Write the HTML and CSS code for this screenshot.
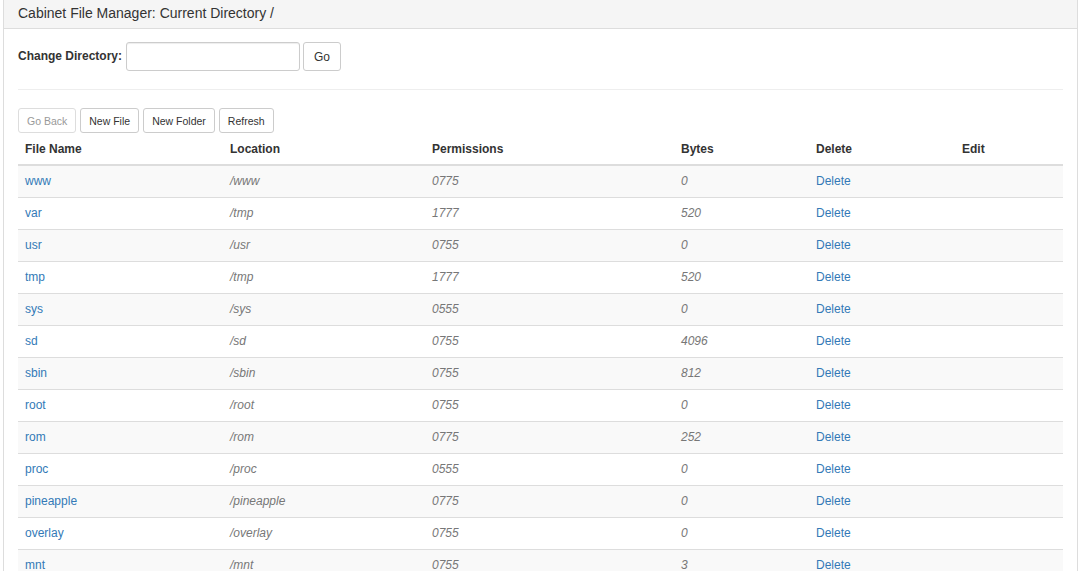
FILE: index.html
```html
<!DOCTYPE html>
<html lang="en">
<head>
<meta charset="utf-8">
<title>Cabinet File Manager</title>
<link rel="stylesheet" href="styles.css">
</head>
<body>
<div class="panel">
  <div class="panel-heading">Cabinet File Manager: Current Directory /</div>
  <div class="panel-body">
    <form class="dir-form">
      <label class="dir-label" for="dir">Change Directory:</label>
      <input class="dir-input" id="dir" type="text">
      <button class="btn btn-go" type="button">Go</button>
    </form>
    <hr class="divider">
    <div class="toolbar">
      <button class="btn btn-sm" type="button" disabled>Go Back</button>
      <button class="btn btn-sm" type="button">New File</button>
      <button class="btn btn-sm" type="button">New Folder</button>
      <button class="btn btn-sm" type="button">Refresh</button>
    </div>
    <table class="files">
      <colgroup>
        <col class="c-name"><col class="c-loc"><col class="c-perm"><col class="c-bytes"><col class="c-del"><col class="c-edit">
      </colgroup>
      <thead>
        <tr><th>File Name</th><th>Location</th><th>Permissions</th><th>Bytes</th><th>Delete</th><th>Edit</th></tr>
      </thead>
      <tbody>
        <tr><td><a href="#">www</a></td><td class="m">/www</td><td class="m">0775</td><td class="m">0</td><td><a href="#">Delete</a></td><td></td></tr>
        <tr><td><a href="#">var</a></td><td class="m">/tmp</td><td class="m">1777</td><td class="m">520</td><td><a href="#">Delete</a></td><td></td></tr>
        <tr><td><a href="#">usr</a></td><td class="m">/usr</td><td class="m">0755</td><td class="m">0</td><td><a href="#">Delete</a></td><td></td></tr>
        <tr><td><a href="#">tmp</a></td><td class="m">/tmp</td><td class="m">1777</td><td class="m">520</td><td><a href="#">Delete</a></td><td></td></tr>
        <tr><td><a href="#">sys</a></td><td class="m">/sys</td><td class="m">0555</td><td class="m">0</td><td><a href="#">Delete</a></td><td></td></tr>
        <tr><td><a href="#">sd</a></td><td class="m">/sd</td><td class="m">0755</td><td class="m">4096</td><td><a href="#">Delete</a></td><td></td></tr>
        <tr><td><a href="#">sbin</a></td><td class="m">/sbin</td><td class="m">0755</td><td class="m">812</td><td><a href="#">Delete</a></td><td></td></tr>
        <tr><td><a href="#">root</a></td><td class="m">/root</td><td class="m">0755</td><td class="m">0</td><td><a href="#">Delete</a></td><td></td></tr>
        <tr><td><a href="#">rom</a></td><td class="m">/rom</td><td class="m">0775</td><td class="m">252</td><td><a href="#">Delete</a></td><td></td></tr>
        <tr><td><a href="#">proc</a></td><td class="m">/proc</td><td class="m">0555</td><td class="m">0</td><td><a href="#">Delete</a></td><td></td></tr>
        <tr><td><a href="#">pineapple</a></td><td class="m">/pineapple</td><td class="m">0775</td><td class="m">0</td><td><a href="#">Delete</a></td><td></td></tr>
        <tr><td><a href="#">overlay</a></td><td class="m">/overlay</td><td class="m">0755</td><td class="m">0</td><td><a href="#">Delete</a></td><td></td></tr>
        <tr><td><a href="#">mnt</a></td><td class="m">/mnt</td><td class="m">0755</td><td class="m">3</td><td><a href="#">Delete</a></td><td></td></tr>
      </tbody>
    </table>
  </div>
</div>
</body>
</html>
```

FILE: styles.css
```css
html, body {
  margin: 0;
  padding: 0;
  background: #fff;
}
body {
  font-family: "Liberation Sans", Arial, sans-serif;
  font-size: 12px;
  line-height: 17px;
  color: #333;
}
.panel {
  margin: 0 2px 0 3px;
  border: 1px solid #ddd;
  border-top: 0;
  background: #fff;
}
.panel-heading {
  background: #f5f5f5;
  border-bottom: 1px solid #ddd;
  padding: 5px 14px 6px;
  font-size: 14px;
  line-height: 17px;
  color: #333;
}
.panel-body {
  padding: 13px 14px 14px;
}
.dir-form {
  display: flex;
  align-items: center;
  margin: 0;
}
.dir-label {
  font-weight: bold;
  margin-right: 4px;
}
.dir-input {
  box-sizing: border-box;
  width: 174px;
  height: 29px;
  border: 1px solid #ccc;
  border-radius: 3px;
  box-shadow: inset 0 1px 1px rgba(0,0,0,.075);
  font: inherit;
  padding: 4px 8px;
  margin: 0 3px 0 0;
}
.btn {
  box-sizing: border-box;
  background: #fff;
  border: 1px solid #ccc;
  border-radius: 3px;
  color: #333;
  font-family: inherit;
  cursor: pointer;
  margin: 0;
}
.btn-go {
  height: 29px;
  width: 38px;
  font-size: 12px;
  padding: 0;
}
.divider {
  border: 0;
  border-top: 1px solid #eee;
  margin: 18px 0 18px;
}
.toolbar {
  display: flex;
  gap: 4px;
  margin-bottom: 2px;
}
.btn-sm {
  height: 25px;
  font-size: 10.5px;
  padding: 0 8px;
  line-height: 14px;
}
.btn-sm:disabled {
  color: #999;
  border-color: #ddd;
  cursor: not-allowed;
}
.files {
  width: 100%;
  table-layout: fixed;
  border-collapse: collapse;
  border-spacing: 0;
}
.c-name { width: 205px; }
.c-loc { width: 202px; }
.c-perm { width: 249px; }
.c-bytes { width: 135px; }
.c-del { width: 146px; }
.c-edit { width: auto; }
.files th {
  text-align: left;
  font-weight: bold;
  padding: 6px 7px;
  border-bottom: 2px solid #ddd;
  color: #333;
}
.files td {
  padding: 7px 7px;
  border-top: 1px solid #ddd;
  white-space: nowrap;
}
.files tbody tr:nth-child(odd) {
  background: #f9f9f9;
}
.files a {
  color: #337ab7;
  text-decoration: none;
}
.files .m {
  font-style: italic;
  color: #777;
}
```
